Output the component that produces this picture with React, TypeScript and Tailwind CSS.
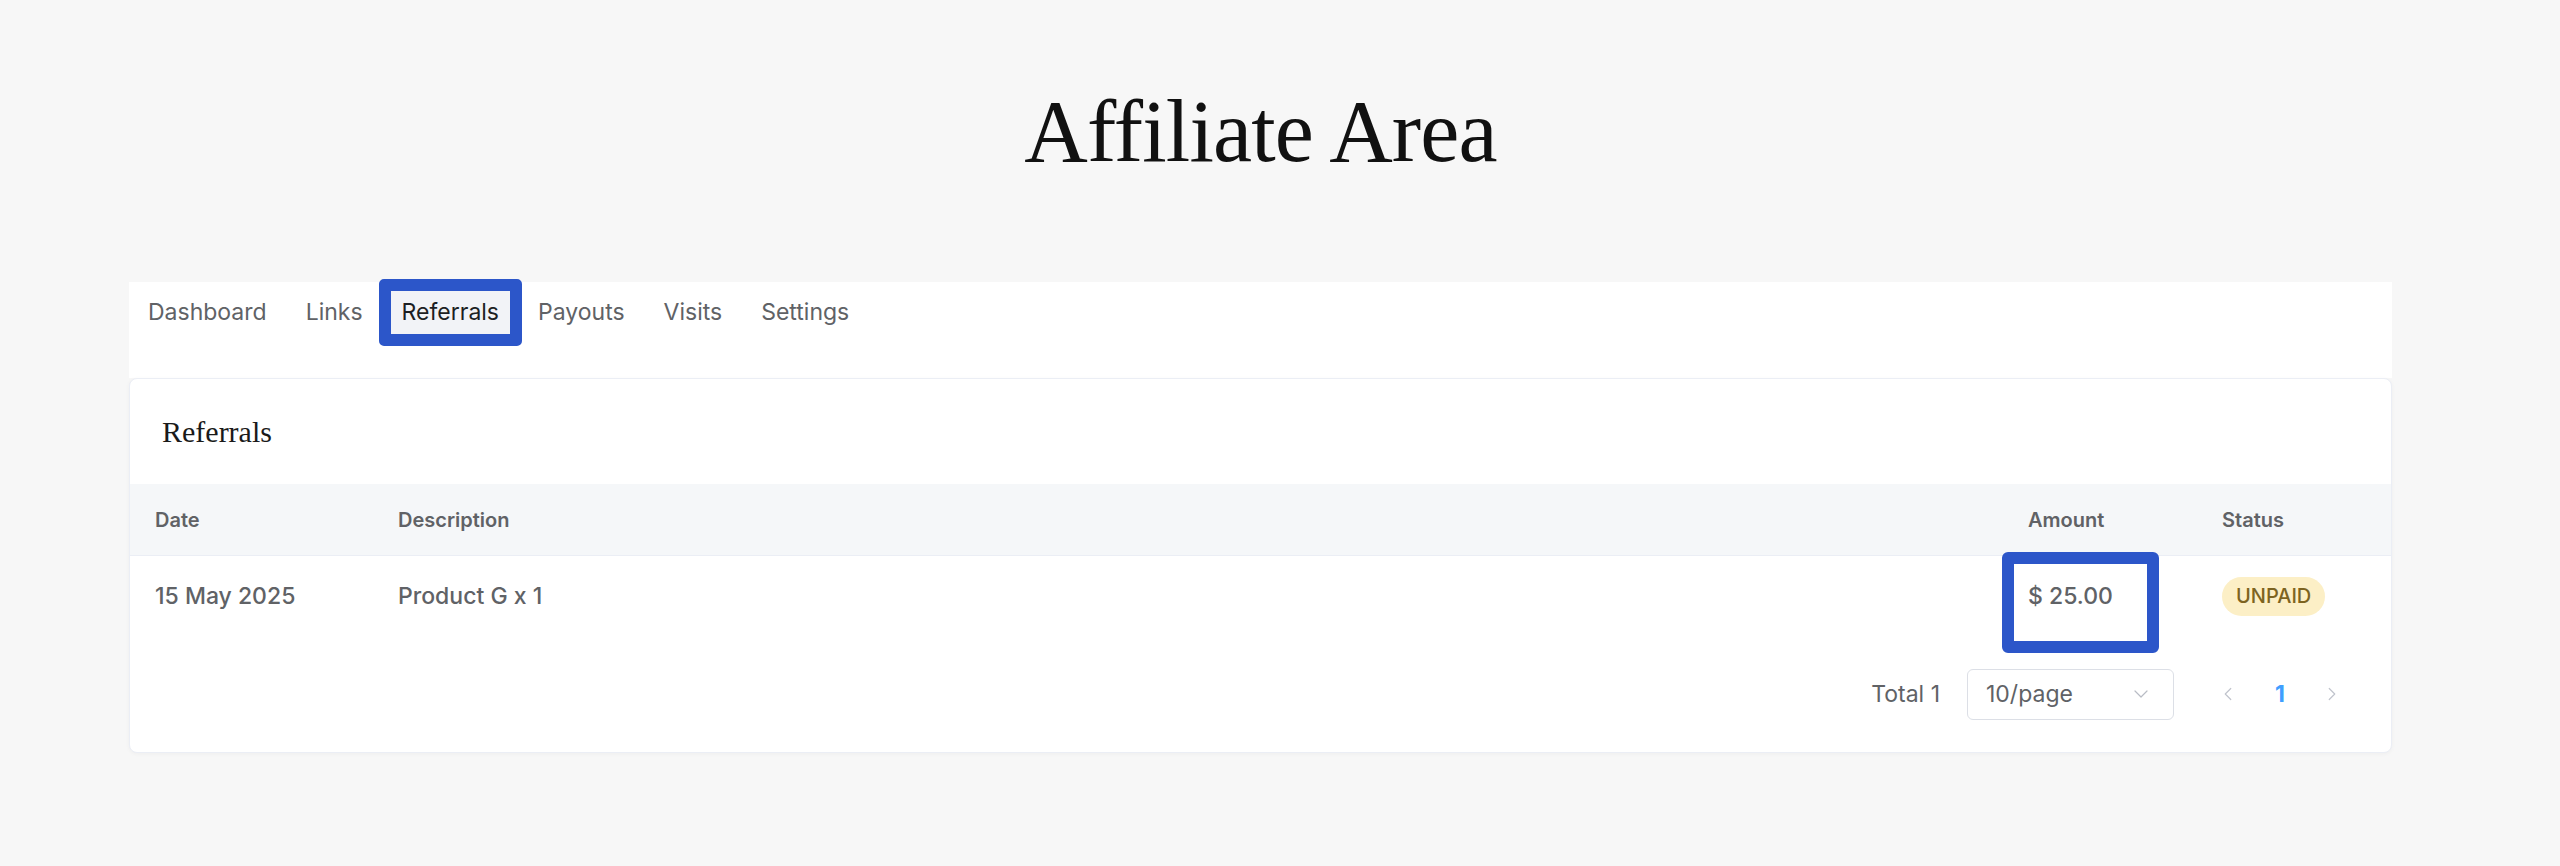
import React from "react";
import { ChevronDown, ChevronLeft, ChevronRight } from "lucide-react";

const tabs = ["Dashboard", "Links", "Referrals", "Payouts", "Visits", "Settings"];

export default function App() {
  return (
    <div
      className="min-h-[866px] w-full bg-[#f7f7f7] pt-[88px]"
      style={{ fontFamily: "Inter, 'Noto Sans', sans-serif" }}
    >
      <div className="ml-[129px] w-[2263px]">
        <h1
          className="h-[88px] text-center text-[88px] leading-none text-[#111111] tracking-[-0.01em]"
          style={{ fontFamily: "'Liberation Serif', 'DejaVu Serif', serif" }}
        >
          Affiliate Area
        </h1>

        <div className="mt-[106px] flex h-[96px] items-start gap-[17px] bg-white pl-[8px] pt-[9px]">
          {tabs.map((t) => {
            const active = t === "Referrals";
            return (
              <div
                key={t}
                className={
                  active
                    ? "relative flex h-[43px] items-center bg-[#f2f3f7] px-[11px] text-[23px] text-[#1d1f23]"
                    : "relative flex h-[43px] items-center px-[11px] text-[23px] text-[#606266]"
                }
              >
                {t}
                {active && (
                  <span className="pointer-events-none absolute -inset-[12px] rounded-[5px] border-[12px] border-[#2c56c9]" />
                )}
              </div>
            );
          })}
        </div>

        <div className="rounded-[8px] border border-[#ebeef5] bg-white shadow-[0_1px_4px_rgba(0,0,0,0.04)]">
          <div className="flex h-[105px] items-center pl-[32px]">
            <h2
              className="text-[30px] leading-none text-[#1a1a1a]"
              style={{ fontFamily: "'Liberation Serif', 'DejaVu Serif', serif" }}
            >
              Referrals
            </h2>
          </div>

          <div className="grid h-[72px] grid-cols-[243px_1629px_195px_1fr] items-center border-b border-[#ebeef5] bg-[#f5f7f9] text-[20px] font-semibold text-[#606266]">
            <div className="pl-[25px]">Date</div>
            <div className="pl-[25px]">Description</div>
            <div className="pl-[26px]">Amount</div>
            <div className="pl-[25px]">Status</div>
          </div>

          <div className="grid h-[80px] grid-cols-[243px_1629px_195px_1fr] items-center text-[23px] font-medium text-[#606266]">
            <div className="pl-[25px]">15 May 2025</div>
            <div className="pl-[25px]">Product G x 1</div>
            <div className="relative flex h-full items-center pl-[26px]">
              $ 25.00
              <span className="pointer-events-none absolute left-0 top-[-4px] h-[101px] w-[157px] rounded-[6px] border-[12px] border-[#2c56c9]" />
            </div>
            <div className="pl-[25px]">
              <span className="inline-flex h-[39px] items-center rounded-full bg-[#fcefc6] px-[14px] text-[20px] font-medium text-[#7d6320]">
                UNPAID
              </span>
            </div>
          </div>

          <div className="flex h-[116px] items-center justify-end pr-[33px]">
            <span className="text-[23px] text-[#606266]">Total 1</span>
            <div className="ml-[27px] flex h-[51px] w-[207px] items-center justify-between rounded-[6px] border border-[#dcdfe6] pl-[18px] pr-[20px]">
              <span className="text-[23px] text-[#606266]">10/page</span>
              <ChevronDown size={24} strokeWidth={1.2} className="text-[#b8bcc4]" />
            </div>
            <div className="ml-[28px] flex items-center">
              <div className="flex h-[52px] w-[52px] items-center justify-center">
                <ChevronLeft size={22} strokeWidth={1.3} className="text-[#c0c4cc]" />
              </div>
              <div className="flex h-[52px] w-[52px] items-center justify-center text-[23px] font-bold text-[#409eff]">
                1
              </div>
              <div className="flex h-[52px] w-[52px] items-center justify-center">
                <ChevronRight size={22} strokeWidth={1.3} className="text-[#c0c4cc]" />
              </div>
            </div>
          </div>
        </div>
      </div>
    </div>
  );
}
